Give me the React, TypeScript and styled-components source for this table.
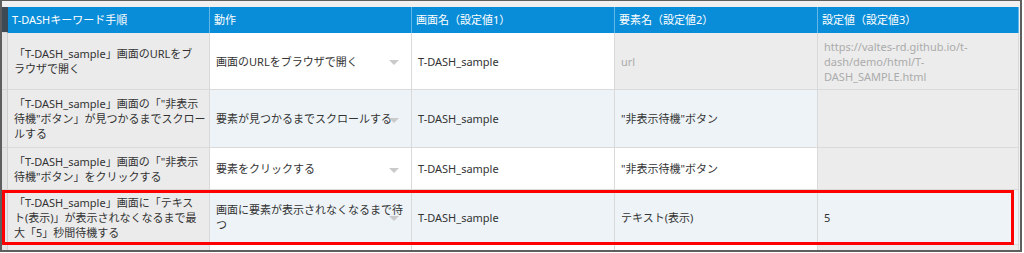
import styled, { createGlobalStyle } from 'styled-components'

const GlobalStyle = createGlobalStyle`
    html, body {
        margin: 0;
        padding: 0;
        background: #ffffff;
    }
    body {
        font-family: "Noto Sans", "Noto Sans CJK JP", sans-serif;
    }
`

const COLUMNS = '6px 202px 202px 203px 203px 201px'

type Tone = 'label' | 'plain' | 'alt' | 'disabled'

const toneColor: Record<Tone, string> = {
    label: '#ebebeb',
    plain: '#ffffff',
    alt: '#eef3f8',
    disabled: '#ececec',
}

const Frame = styled.div`
    box-sizing: border-box;
    width: 1022px;
    height: 252px;
    border: 2px solid #5e5e5e;
    border-top-width: 1px;
    background: #f0f0f0;
    padding-top: 6px;
    overflow: hidden;
`

const Table = styled.div`
    display: flex;
    flex-direction: column;
`

const Row = styled.div<{ $height: number }>`
    position: relative;
    display: grid;
    grid-template-columns: ${COLUMNS};
    height: ${(p) => p.$height}px;
    flex-shrink: 0;
`

const Stub = styled.div<{ $head?: boolean }>`
    background: ${(p) => (p.$head ? '#3d4a56' : '#e4e4e4')};
    border-right: 1px solid ${(p) => (p.$head ? '#3d4a56' : '#cfcfcf')};
    border-bottom: 1px solid #d6d6d6;
`

const HeadCell = styled.div`
    box-sizing: border-box;
    display: flex;
    align-items: center;
    padding: 0 4px 2px;
    background: #0a8dd8;
    border-right: 1px solid #62b6e8;
    color: #ffffff;
    font-size: 11px;
    font-family: "Noto Sans", "Noto Sans CJK JP", sans-serif;
    white-space: nowrap;
`

const Cell = styled.div<{ $tone: Tone; $select?: boolean }>`
    position: relative;
    box-sizing: border-box;
    display: flex;
    align-items: center;
    padding: 0 6px;
    background: ${(p) => toneColor[p.$tone]};
    border-right: 1px solid #d9d9d9;
    border-bottom: 1px solid #dadada;
    color: ${(p) => (p.$tone === 'disabled' ? '#ababab' : '#333333')};
    font-size: 11px;
    line-height: 15px;
    white-space: nowrap;

    ${(p) =>
        p.$select &&
        `
        &::after {
            content: '';
            position: absolute;
            right: 12px;
            top: 50%;
            margin-top: -1px;
            border-left: 5px solid transparent;
            border-right: 5px solid transparent;
            border-top: 5px solid #cacaca;
        }
    `}
`

const Highlight = styled.div`
    position: absolute;
    left: 0;
    right: 6px;
    top: 0;
    bottom: 0;
    border: 3px solid #ff0000;
    pointer-events: none;
`

type Step = {
    height: number
    alt: boolean
    keyword: string[]
    action: string[]
    screen: string
    element: string
    elementDisabled?: boolean
    value: string[]
    valueDisabled?: boolean
    marked?: boolean
}

const steps: Step[] = [
    {
        height: 57,
        alt: false,
        keyword: ['「T-DASH_sample」画面のURLをブ', 'ラウザで開く'],
        action: ['画面のURLをブラウザで開く'],
        screen: 'T-DASH_sample',
        element: 'url',
        elementDisabled: true,
        value: [
            'https://valtes-rd.github.io/t-',
            'dash/demo/html/T-',
            'DASH_SAMPLE.html',
        ],
        valueDisabled: true,
    },
    {
        height: 58,
        alt: true,
        keyword: [
            '「T-DASH_sample」画面の「"非表示',
            '待機"ボタン」が見つかるまでスクロー',
            'ルする',
        ],
        action: ['要素が見つかるまでスクロールする'],
        screen: 'T-DASH_sample',
        element: '"非表示待機"ボタン',
        value: [],
        valueDisabled: true,
    },
    {
        height: 42,
        alt: false,
        keyword: ['「T-DASH_sample」画面の「"非表示', '待機"ボタン」をクリックする'],
        action: ['要素をクリックする'],
        screen: 'T-DASH_sample',
        element: '"非表示待機"ボタン',
        value: [],
        valueDisabled: true,
    },
    {
        height: 55,
        alt: true,
        keyword: [
            '「T-DASH_sample」画面に「テキス',
            'ト(表示)」が表示されなくなるまで最',
            '大「5」秒間待機する',
        ],
        action: ['画面に要素が表示されなくなるまで待', 'つ'],
        screen: 'T-DASH_sample',
        element: 'テキスト(表示)',
        value: ['5'],
        marked: true,
    },
]

const Lines = ({ lines }: { lines: string[] }) => (
    <div>
        {lines.map((line, i) => (
            <div key={i}>{line}</div>
        ))}
    </div>
)

export default function App() {
    return (
        <>
            <GlobalStyle />
            <Frame>
                <Table>
                    <Row $height={26}>
                        <Stub $head />
                        <HeadCell>T-DASHキーワード手順</HeadCell>
                        <HeadCell>動作</HeadCell>
                        <HeadCell>画面名（設定値1）</HeadCell>
                        <HeadCell>要素名（設定値2）</HeadCell>
                        <HeadCell>設定値（設定値3）</HeadCell>
                    </Row>
                    {steps.map((step, i) => {
                        const tone: Tone = step.alt ? 'alt' : 'plain'
                        return (
                            <Row key={i} $height={step.height}>
                                <Stub />
                                <Cell $tone="label">
                                    <Lines lines={step.keyword} />
                                </Cell>
                                <Cell $tone={tone} $select>
                                    <Lines lines={step.action} />
                                </Cell>
                                <Cell $tone={tone}>{step.screen}</Cell>
                                <Cell $tone={step.elementDisabled ? 'disabled' : tone}>
                                    {step.element}
                                </Cell>
                                <Cell $tone={step.valueDisabled ? 'disabled' : tone}>
                                    <Lines lines={step.value} />
                                </Cell>
                                {step.marked && <Highlight />}
                            </Row>
                        )
                    })}
                    <Row $height={20}>
                        <Stub />
                        <Cell $tone="label" />
                        <Cell $tone="plain" />
                        <Cell $tone="plain" />
                        <Cell $tone="plain" />
                        <Cell $tone="disabled" />
                    </Row>
                </Table>
            </Frame>
        </>
    )
}
